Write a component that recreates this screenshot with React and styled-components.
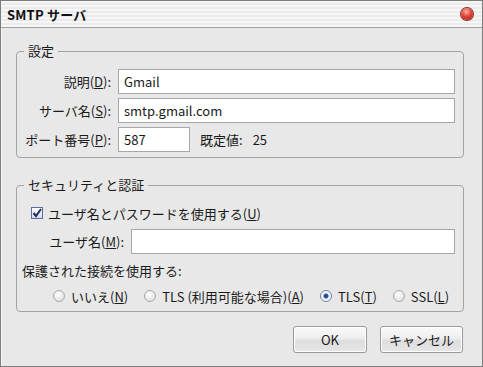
import React, { useState } from 'react';
import styled, { createGlobalStyle } from 'styled-components';

const GlobalStyle = createGlobalStyle`
  html, body {
    margin: 0;
    padding: 0;
    background: #ffffff;
  }
  body {
    font-family: "Noto Sans CJK JP", "Noto Sans", sans-serif;
    font-size: 13px;
    color: #1a1a1a;
  }
`;

// window frame
const Window = styled.div`
  width: 483px;
  height: 367px;
  box-sizing: border-box;
  border: 1px solid #7d7d7d;
  box-shadow: inset 1px 1px 0 #fafafa;
  background: #e8e8e8;
  display: flex;
  flex-direction: column;
`;

const TitleBar = styled.div`
  height: 26px;
  flex: none;
  display: flex;
  align-items: center;
  justify-content: space-between;
  padding: 0 9px 0 6px;
  border-bottom: 1px solid #a2a2a2;
  background: repeating-linear-gradient(
    to bottom,
    #f6f6f6 0px,
    #f6f6f6 2px,
    #ebebeb 2px,
    #ebebeb 4px
  );
`;

const Title = styled.span`
  font-weight: bold;
  font-size: 13px;
  color: #111;
  letter-spacing: 0.2px;
`;

const CloseDot = styled.span`
  width: 12px;
  height: 12px;
  border-radius: 50%;
  background: radial-gradient(circle at 45% 30%, #ffb3a8 0%, #e0473a 45%, #a81d12 100%);
  box-shadow: 0 0 0 1px #8f2a22;
`;

const Body = styled.div`
  flex: 1;
  display: flex;
  flex-direction: column;
  padding: 23px 18px 0 15px;
`;

// group box with its caption laid over the top border
const Group = styled.div`
  position: relative;
  border: 1px solid #a3a3a3;
  border-radius: 4px;
  padding: ${p => p.$pad};
  margin-bottom: ${p => p.$mb || 0}px;
`;

const Legend = styled.span`
  position: absolute;
  top: -10px;
  left: 7px;
  padding: 0 4px;
  background: #e8e8e8;
  line-height: 18px;
`;

const FormGrid = styled.div`
  display: grid;
  grid-template-columns: ${p => p.$label}px 1fr;
  column-gap: 7px;
  row-gap: 4px;
  align-items: center;
`;

const Label = styled.label`
  text-align: right;
  white-space: nowrap;
`;

const Key = styled.span`
  text-decoration: underline;
  text-underline-offset: 1px;
`;

const TextInput = styled.input`
  box-sizing: border-box;
  height: 25px;
  width: ${p => (p.$w ? `${p.$w}px` : '100%')};
  border: 1px solid #a7a7a7;
  background: #fff;
  padding: 0 5px;
  font: inherit;
  color: #1a1a1a;
  outline: none;
`;

const PortRow = styled.div`
  display: flex;
  align-items: center;
  gap: 10px;
`;

const DefaultVal = styled.span`
  display: flex;
  gap: 10px;
`;

const CheckRow = styled.label`
  display: flex;
  align-items: center;
  gap: 5px;
  height: 20px;
  margin-left: 9px;
  margin-bottom: 6px;
`;

const Box = styled.span`
  width: 12px;
  height: 12px;
  box-sizing: border-box;
  border: 1px solid #5a6f95;
  background: linear-gradient(#ffffff, #d5dcea);
  display: flex;
  align-items: center;
  justify-content: center;
`;

const Caption = styled.div`
  height: 20px;
  line-height: 20px;
  margin: 7px 0 5px 0;
`;

const RadioRow = styled.div`
  display: flex;
  align-items: center;
  gap: 16px;
  padding-left: 31px;
  height: 20px;
`;

const RadioItem = styled.label`
  display: flex;
  align-items: center;
  gap: 6px;
  white-space: nowrap;
`;

const RadioDot = styled.span`
  width: 12px;
  height: 12px;
  box-sizing: border-box;
  border-radius: 50%;
  border: 1px solid ${p => (p.$on ? '#6b7e9c' : '#a9a9a9')};
  background: ${p =>
    p.$on
      ? 'radial-gradient(circle, #1d3f86 0, #2f56a8 2px, #eef2f8 3px, #ffffff 6px)'
      : 'radial-gradient(circle at 40% 35%, #ffffff 0, #e3e3e3 70%, #d2d2d2 100%)'};
`;

const ButtonBar = styled.div`
  display: flex;
  justify-content: flex-end;
  gap: 13px;
  margin-top: 14px;
  padding-right: 1px;
`;

const Button = styled.button`
  width: ${p => p.$w}px;
  height: 27px;
  border: 1px solid #9a9a9a;
  border-radius: 3px;
  background: linear-gradient(#fafafa 0%, #eeeeee 45%, #dddddd 55%, #e6e6e6 100%);
  box-shadow: inset 0 0 0 1px #ffffff;
  font: inherit;
  color: #1a1a1a;
  padding: 0;
`;

const protocols = [
  { id: 'none', text: 'いいえ', key: 'N' },
  { id: 'tlsopt', text: 'TLS (利用可能な場合)', key: 'A' },
  { id: 'tls', text: 'TLS', key: 'T' },
  { id: 'ssl', text: 'SSL', key: 'L' },
];

const App = () => {
  const [security, setSecurity] = useState('tls');

  return (
    <>
      <GlobalStyle />
      <Window>
        <TitleBar>
          <Title>SMTP サーバ</Title>
          <CloseDot />
        </TitleBar>

        <Body>
          {/* server settings */}
          <Group $pad="17px 8px 5px 8px" $mb={27}>
            <Legend>設定</Legend>
            <FormGrid $label={86}>
              <Label>説明(<Key>D</Key>):</Label>
              <TextInput defaultValue="Gmail" />
              <Label>サーバ名(<Key>S</Key>):</Label>
              <TextInput defaultValue="smtp.gmail.com" />
              <Label>ポート番号(<Key>P</Key>):</Label>
              <PortRow>
                <TextInput $w={72} defaultValue="587" />
                <DefaultVal>
                  <span>既定値:</span>
                  <span>25</span>
                </DefaultVal>
              </PortRow>
            </FormGrid>
          </Group>

          {/* security and authentication */}
          <Group $pad="17px 8px 5px 5px">
            <Legend>セキュリティと認証</Legend>
            <CheckRow>
              <Box>
                <svg width="10" height="10" viewBox="0 0 10 10">
                  <path d="M1.5 5 L4 8 L9 1" fill="none" stroke="#1c2f66" strokeWidth="2" />
                </svg>
              </Box>
              <span>
                ユーザ名とパスワードを使用する(<Key>U</Key>)
              </span>
            </CheckRow>
            <FormGrid $label={102}>
              <Label>ユーザ名(<Key>M</Key>):</Label>
              <TextInput />
            </FormGrid>
            <Caption>保護された接続を使用する:</Caption>
            <RadioRow>
              {protocols.map(p => (
                <RadioItem key={p.id} onClick={() => setSecurity(p.id)}>
                  <RadioDot $on={security === p.id} />
                  <span>
                    {p.text}(<Key>{p.key}</Key>)
                  </span>
                </RadioItem>
              ))}
            </RadioRow>
          </Group>

          <ButtonBar>
            <Button $w={74}>OK</Button>
            <Button $w={83}>キャンセル</Button>
          </ButtonBar>
        </Body>
      </Window>
    </>
  );
};

export default App;
